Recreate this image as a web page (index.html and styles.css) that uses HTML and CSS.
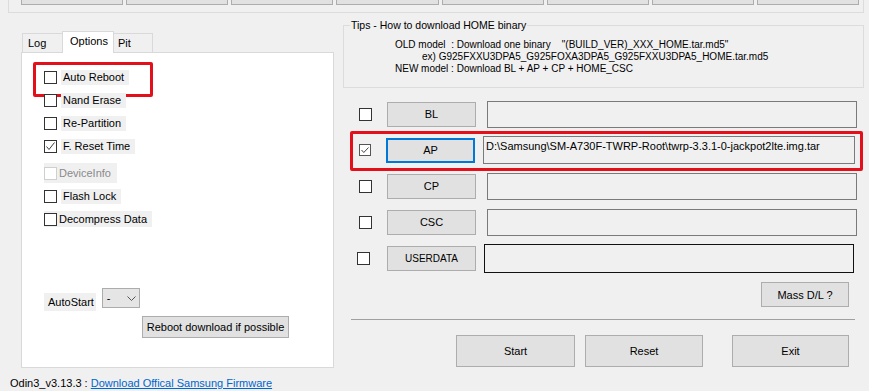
FILE: index.html
```html
<!DOCTYPE html>
<html lang="en">
<head>
    <meta charset="UTF-8">
    <title>Odin3</title>
    <link rel="stylesheet" href="styles.css">
</head>
<body>
    <!-- ID:COM slots, cut off at the top -->
    <div class="top-group">
        <div class="slot"></div>
        <div class="slot"></div>
        <div class="slot"></div>
        <div class="slot"></div>
        <div class="slot"></div>
        <div class="slot"></div>
        <div class="slot"></div>
        <div class="slot"></div>
    </div>

    <div class="main">
        <div class="left">
            <div class="tabs">
                <div class="tab tab-log">Log</div>
                <div class="tab tab-options">Options</div>
                <div class="tab tab-pit">Pit</div>
            </div>

            <div class="panel">
                <div class="opts">
                    <div class="opt marked">
                        <span class="box"></span><span class="label">Auto Reboot</span>
                    </div>
                    <div class="opt">
                        <span class="box"></span><span class="label">Nand Erase</span>
                    </div>
                    <div class="opt">
                        <span class="box"></span><span class="label">Re-Partition</span>
                    </div>
                    <div class="opt">
                        <span class="box">
                            <svg width="11" height="11" viewBox="0 0 11 11"><polyline points="1.5,5.5 4,8.5 9.5,1.5" fill="none" stroke="#3c3c3c" stroke-width="1"/></svg>
                        </span><span class="label">F. Reset Time</span>
                    </div>
                    <div class="opt filled disabled">
                        <span class="box"></span><span class="label">DeviceInfo</span>
                    </div>
                    <div class="opt">
                        <span class="box"></span><span class="label">Flash Lock</span>
                    </div>
                    <div class="opt filled">
                        <span class="box"></span><span class="label">Decompress Data</span>
                    </div>
                </div>

                <div class="autostart">
                    <span class="as-label">AutoStart</span>
                    <div class="combo">
                        <span>-</span>
                        <svg width="9" height="5" viewBox="0 0 9 5"><polyline points="0.5,0.5 4.5,4.5 8.5,0.5" fill="none" stroke="#555" stroke-width="1"/></svg>
                    </div>
                </div>

                <button class="btn reboot">Reboot download if possible</button>
            </div>

            <div class="footer">Odin3_v3.13.3 : <a href="#">Download Offical Samsung Firmware</a></div>
        </div>

        <div class="right">
            <fieldset class="tips">
                <legend>Tips - How to download HOME binary</legend>
                <div class="tip-lines">
                    <div>OLD model&nbsp; : Download one binary &nbsp;&nbsp; "(BUILD_VER)_XXX_HOME.tar.md5"</div>
                    <div class="indent">ex) G925FXXU3DPA5_G925FOXA3DPA5_G925FXXU3DPA5_HOME.tar.md5</div>
                    <div>NEW model : Download BL + AP + CP + HOME_CSC</div>
                </div>
            </fieldset>

            <div class="files">
                <div class="frow">
                    <span class="box"></span>
                    <button class="btn fbtn">BL</button>
                    <div class="field"></div>
                </div>
                <div class="frow marked ap">
                    <span class="box small">
                        <svg width="10" height="10" viewBox="0 0 10 10"><polyline points="1.5,5 3.8,7.5 8.5,2.5" fill="none" stroke="#444" stroke-width="1"/></svg>
                    </span>
                    <button class="btn fbtn focused">AP</button>
                    <div class="field">D:\Samsung\SM-A730F-TWRP-Root\twrp-3.3.1-0-jackpot2lte.img.tar</div>
                </div>
                <div class="frow">
                    <span class="box"></span>
                    <button class="btn fbtn">CP</button>
                    <div class="field"></div>
                </div>
                <div class="frow">
                    <span class="box"></span>
                    <button class="btn fbtn">CSC</button>
                    <div class="field"></div>
                </div>
                <div class="frow userdata">
                    <span class="box"></span>
                    <button class="btn fbtn">USERDATA</button>
                    <div class="field"></div>
                </div>
            </div>

            <button class="btn mass">Mass D/L ?</button>
            <div class="sep"></div>

            <div class="actions">
                <button class="btn start">Start</button>
                <button class="btn reset">Reset</button>
                <button class="btn exit">Exit</button>
            </div>
        </div>
    </div>
</body>
</html>
```

FILE: styles.css
```css
* {
    box-sizing: border-box;
}

body {
    margin: 0;
    width: 869px;
    height: 391px;
    overflow: hidden;
    background-color: #f0f0f0;
    font-family: "Liberation Sans", Arial, sans-serif;
    font-size: 11px;
    color: #000;
}

/* top group with the port slots */
.top-group {
    display: flex;
    gap: 3px;
    margin: 0 5px 0 8px;
    height: 13px;
    padding: 0 4px 0 12px;
    border: 1px solid #dcdcdc;
    border-top: none;
}

.slot {
    flex: 1;
    height: 5px;
    background-color: #e1e1e1;
    border: 1px solid #adadad;
    border-top: none;
}

.main {
    display: flex;
}

.left {
    width: 343px;
    padding-top: 18px;
}

/* tabs */
.tabs {
    display: flex;
    align-items: flex-start;
    height: 22px;
    margin: 0 0 -1px 22px;
}

.tab {
    position: relative;
    height: 19px;
    margin-top: 2px;
    line-height: 18px;
    border: 1px solid #d9d9d9;
    border-bottom: none;
    background-color: #f0f0f0;
}

.tab-log {
    width: 41px;
    padding-left: 5px;
}

.tab-options {
    width: 52px;
    height: 22px;
    margin-top: 0;
    margin-left: -1px;
    padding-left: 7px;
    line-height: 19px;
    background-color: #fff;
    z-index: 1;
}

.tab-pit {
    width: 40px;
    margin-left: -1px;
    padding-left: 4px;
}

.panel {
    margin-left: 21px;
    width: 313px;
    height: 316px;
    padding: 16px 0 0 22px;
    background-color: #fff;
    border: 1px solid #d9d9d9;
}

.opts {
    display: flex;
    flex-direction: column;
    align-items: flex-start;
    gap: 7px;
}

.opt {
    position: relative;
    display: flex;
    align-items: center;
    height: 16px;
}

.box {
    flex: none;
    display: flex;
    align-items: center;
    justify-content: center;
    width: 13px;
    height: 13px;
    background-color: #fff;
    border: 1px solid #333;
}

.opt .label {
    height: 15px;
    line-height: 15px;
    margin-left: 4px;
    padding: 0 5px 0 2px;
    background-color: #f0f0f0;
}

.opt.filled {
    background-color: #f0f0f0;
}

.opt.filled .label {
    margin-left: 2px;
    padding-left: 0;
    background: none;
}

.opt.disabled {
    height: 20px;
    margin: 2px 0 -2px;
    padding-right: 1px;
}

.opt.disabled .box {
    border-color: #cfcfcf;
}

.opt.disabled .label {
    color: #8a8a8a;
}

/* red annotation frames */
.opt.marked::after {
    content: "";
    position: absolute;
    left: -11px;
    top: -7px;
    width: 114px;
    height: 29px;
    border: 3px solid #e3101b;
    border-radius: 2px;
}

.frow.marked::after {
    content: "";
    position: absolute;
    left: 7px;
    right: 1px;
    top: -1px;
    bottom: -3px;
    border: 3px solid #e3101b;
    border-radius: 2px;
}

.autostart {
    display: flex;
    align-items: flex-start;
    margin-top: 61px;
    height: 20px;
}

.as-label {
    margin-top: 5px;
    height: 18px;
    line-height: 18px;
    padding: 0 2px 0 4px;
    background-color: #f0f0f0;
}

.combo {
    display: flex;
    align-items: center;
    justify-content: space-between;
    margin-left: 6px;
    width: 38px;
    height: 20px;
    padding: 0 3px 0 4px;
    background-color: #e5e5e5;
    border: 1px solid #acacac;
}

.btn {
    display: block;
    padding: 0;
    font-family: "Liberation Sans", Arial, sans-serif;
    font-size: 11px;
    color: #000;
    background-color: #e1e1e1;
    border: 1px solid #adadad;
}

.reboot {
    margin: 8px 0 0 98px;
    width: 147px;
    height: 22px;
}

.footer {
    margin-top: 8px;
    padding-left: 10px;
    line-height: 14px;
}

.footer a {
    color: #0066cc;
}

/* right side */
.right {
    display: flex;
    flex-direction: column;
    width: 521px;
}

.tips {
    margin: 5px 0 0;
    min-width: 0;
    padding: 7px 0 12px 6px;
    border: 1px solid #dcdcdc;
}

.tips legend {
    padding: 0 1px;
    font-size: 10.5px;
    line-height: 14px;
}

.tip-lines {
    padding-left: 45px;
    font-size: 10px;
    line-height: 12px;
}

.tip-lines .indent {
    padding-left: 27px;
}

.files {
    margin-top: 8px;
}

.frow {
    position: relative;
    display: flex;
    align-items: center;
    height: 36px;
}

.frow .box {
    margin-left: 16px;
}

.frow .box.small {
    width: 12px;
    height: 12px;
    border-color: #555;
}

.fbtn {
    margin-left: 15px;
    width: 89px;
    height: 25px;
}

.fbtn.focused {
    border: 2px solid #0078d7;
}

.field {
    margin-left: 11px;
    width: 370px;
    height: 27px;
    padding: 3px 0 0 2px;
    border: 1px solid #7a7a7a;
    background-color: #f0f0f0;
    white-space: nowrap;
}

.ap .field {
    margin-left: 8px;
    width: 372px;
    height: 28px;
}

.userdata .box {
    margin-left: 14px;
}

.userdata .fbtn {
    margin-left: 17px;
    font-size: 10px;
}

.userdata .field {
    margin-left: 8px;
    height: 29px;
    border-color: #111;
}

.mass {
    align-self: flex-end;
    margin: 6px 15px 0 0;
    width: 88px;
    height: 25px;
}

.sep {
    margin: 12px 9px 0 8px;
    height: 1px;
    background-color: #a0a0a0;
}

.actions {
    display: flex;
    margin-top: 15px;
}

.actions .btn {
    height: 32px;
}

.start {
    margin-left: 113px;
    width: 119px;
}

.reset {
    margin-left: 10px;
    width: 118px;
}

.exit {
    margin-left: 29px;
    width: 117px;
}
```
